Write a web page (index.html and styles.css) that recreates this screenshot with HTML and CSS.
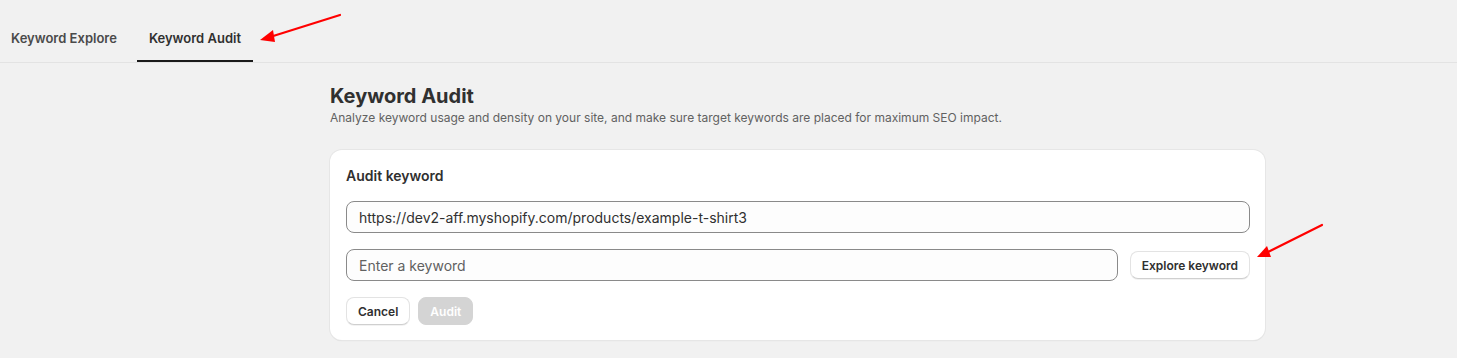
FILE: index.html
```html
<!DOCTYPE html>
<html lang="en">
<head>
    <meta charset="UTF-8">
    <title>Keyword Audit</title>
    <link rel="stylesheet" href="styles.css">
</head>
<body>

    <!-- Tabs -->
    <nav class="tabs">
        <a class="tab" href="#">Keyword Explore</a>
        <a class="tab active" href="#">Keyword Audit</a>
    </nav>

    <!-- Page -->
    <main class="page">
        <h1 class="page-title">Keyword Audit</h1>
        <p class="page-subtitle">Analyze keyword usage and density on your site, and make sure target keywords are placed for maximum SEO impact.</p>

        <section class="card">
            <h2 class="card-title">Audit keyword</h2>
            <input class="field" type="text" value="https://dev2-aff.myshopify.com/products/example-t-shirt3">
            <div class="row">
                <input class="field" type="text" placeholder="Enter a keyword">
                <button class="btn">Explore keyword</button>
            </div>
            <div class="actions">
                <button class="btn">Cancel</button>
                <button class="btn btn-disabled" disabled>Audit</button>
            </div>
        </section>
    </main>

    <!-- Annotation arrows -->
    <svg class="arrow arrow-tab" width="90" height="34" viewBox="0 0 90 34">
        <line x1="84" y1="2" x2="14" y2="24" stroke="#f00" stroke-width="2.2" stroke-linecap="round"/>
        <polygon points="4,27 17,17 19,29" fill="#f00"/>
    </svg>
    <svg class="arrow arrow-btn" width="74" height="40" viewBox="0 0 74 40">
        <line x1="68" y1="2" x2="12" y2="30" stroke="#f00" stroke-width="2.2" stroke-linecap="round"/>
        <polygon points="3,34 13,23 17,34" fill="#f00"/>
    </svg>

</body>
</html>
```

FILE: styles.css
```css
/* Reset */
* {
    margin: 0;
    padding: 0;
    box-sizing: border-box;
}

body {
    background: #f1f1f1;
    color: #303030;
    font-family: 'Inter', 'Liberation Sans', sans-serif;
    position: relative;
    min-height: 358px;
}

/* Tabs */
.tabs {
    display: flex;
    gap: 8px;
    padding-top: 18px;
    border-bottom: 1px solid #e3e3e3;
}

.tab {
    display: flex;
    align-items: center;
    height: 44px;
    padding: 0 12px 2px 11px;
    font-size: 13px;
    font-weight: 600;
    color: #4a4a4a;
    text-decoration: none;
    border-bottom: 2px solid transparent;
}

.tab.active {
    color: #303030;
    border-bottom-color: #1a1a1a;
    padding: 0 12px 2px 12px;
}

/* Page */
.page {
    width: 935px;
    margin-left: 330px;
    padding-top: 21px;
}

.page-title {
    font-size: 20px;
    line-height: 24px;
    font-weight: 700;
    color: #303030;
}

.page-subtitle {
    font-size: 12px;
    line-height: 20px;
    color: #616161;
}

/* Card */
.card {
    margin-top: 22px;
    background: #fff;
    border-radius: 12px;
    box-shadow: 0 0 0 1px #e6e6e6, 0 1px 1px rgba(0, 0, 0, 0.12);
    padding: 16px 15px 15px 16px;
    display: flex;
    flex-direction: column;
    gap: 16px;
}

.card-title {
    font-size: 14px;
    line-height: 19px;
    font-weight: 600;
}

.field {
    width: 100%;
    height: 32px;
    padding: 0 12px;
    border: 1px solid #8a8a8a;
    border-radius: 8px;
    background: #fdfdfd;
    font-family: inherit;
    font-size: 14px;
    color: #303030;
}

.field::placeholder {
    color: #616161;
}

.row {
    display: flex;
    align-items: center;
    gap: 12px;
}

.row .field {
    flex: 1;
}

.actions {
    display: flex;
    gap: 8px;
}

/* Buttons */
.btn {
    height: 28px;
    padding: 0 11px;
    border: 1px solid #e3e3e3;
    border-bottom-color: #cfcfcf;
    border-radius: 8px;
    background: #fff;
    font-family: inherit;
    font-size: 12px;
    font-weight: 600;
    color: #303030;
    white-space: nowrap;
    box-shadow: 0 1px 0 rgba(0, 0, 0, 0.05);
}

.btn-disabled {
    background: #d4d4d4;
    border-color: #d4d4d4;
    color: #fff;
    box-shadow: none;
}

/* Annotation arrows */
.arrow {
    position: absolute;
}

.arrow-tab {
    left: 256px;
    top: 13px;
}

.arrow-btn {
    left: 1254px;
    top: 223px;
}
```
